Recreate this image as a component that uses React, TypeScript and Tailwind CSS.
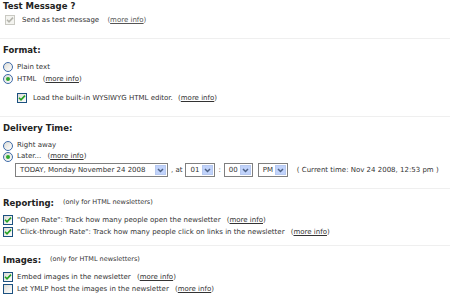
import React from "react";

const font = { fontFamily: '"DejaVu Sans", Verdana, sans-serif' };

function Check({ checked = true, disabled = false }: { checked?: boolean; disabled?: boolean }) {
  return (
    <span
      className={
        "inline-flex items-center justify-center w-[10px] h-[10px] shrink-0 border " +
        (disabled ? "border-[#c9c9c2] bg-[#f4f4f0]" : "border-[#1c5180] bg-gradient-to-br from-[#dcdcd6] to-[#ffffff]")
      }
    >
      {checked && (
        <svg width="8" height="8" viewBox="0 0 8 8">
          <path
            d="M1 3.8 L3 5.8 L7 1.6"
            fill="none"
            stroke={disabled ? "#b4b4ac" : "#21a121"}
            strokeWidth="1.6"
          />
        </svg>
      )}
    </span>
  );
}

function Radio({ checked = false }: { checked?: boolean }) {
  return (
    <span className="inline-flex items-center justify-center w-[10px] h-[10px] shrink-0 rounded-full border border-[#3d6aa8] bg-gradient-to-br from-[#dcdcd6] to-[#ffffff]">
      {checked && <span className="w-[4px] h-[4px] rounded-full bg-[#2fa82f]" />}
    </span>
  );
}

function More() {
  return (
    <span>
      (<span className="underline">more info</span>)
    </span>
  );
}

function Select({ label, width }: { label: string; width: string }) {
  return (
    <span className={"inline-flex items-center h-[14px] border border-[#7f7f7f] bg-white pl-[4px] pr-[1px] " + width}>
      <span className="flex-1 whitespace-nowrap">{label}</span>
      <span className="w-[11px] h-[10px] flex items-center justify-center bg-[#c1d3fb] border border-[#b7c9f0]">
        <svg width="7" height="5" viewBox="0 0 7 5">
          <path d="M1 1 L3.5 3.5 L6 1" fill="none" stroke="#4d6185" strokeWidth="1.5" />
        </svg>
      </span>
    </span>
  );
}

function Sep({ mt }: { mt: string }) {
  return <div className={"h-px bg-[#efefef] w-full " + mt} />;
}

function Heading({ children, mt }: { children: React.ReactNode; mt: string }) {
  return (
    <div className={"h-[12px] flex items-center pl-[3px] " + mt}>
      {children}
    </div>
  );
}

const H = "text-[8.5px] font-bold text-[#222]";
const NOTE = "ml-[9px] text-[6.5px]";

export default function App() {
  return (
    <div className="w-[450px] h-[296px] bg-white text-[#333] overflow-hidden text-[7px]" style={font}>
      <Heading mt="mt-0">
        <span className={H}>Test Message ?</span>
      </Heading>
      <div className="h-[12px] flex items-center mt-[2px] pl-[5px] gap-[7px]">
        <Check disabled />
        <span className="whitespace-nowrap">
          Send as test message <span className="ml-[6px] text-[#555]"><More /></span>
        </span>
      </div>

      <Sep mt="mt-[12px]" />
      <Heading mt="mt-[5px]">
        <span className={H}>Format:</span>
      </Heading>
      <div className="h-[12px] flex items-center mt-[5px] pl-[3px] gap-[4px]">
        <Radio />
        <span>Plain text</span>
      </div>
      <div className="h-[12px] flex items-center pl-[3px] gap-[4px]">
        <Radio checked />
        <span className="whitespace-nowrap">
          HTML <span className="ml-[4px]"><More /></span>
        </span>
      </div>
      <div className="h-[12px] flex items-center mt-[7px] pl-[17px] gap-[6px]">
        <Check />
        <span className="whitespace-nowrap">
          Load the built-in WYSIWYG HTML editor. <span className="ml-[3px]"><More /></span>
        </span>
      </div>

      <Sep mt="mt-[12px]" />
      <Heading mt="mt-[5px]">
        <span className={H}>Delivery Time:</span>
      </Heading>
      <div className="h-[11px] flex items-center mt-[6px] pl-[3px] gap-[4px]">
        <Radio />
        <span>Right away</span>
      </div>
      <div className="h-[11px] flex items-center pl-[3px] gap-[4px]">
        <Radio checked />
        <span className="whitespace-nowrap">
          Later... <span className="ml-[4px]"><More /></span>
        </span>
      </div>
      <div className="h-[14px] flex items-center mt-[1px] pl-[15px] whitespace-nowrap">
        <Select label="TODAY, Monday November 24 2008" width="w-[153px]" />
        <span className="ml-[3px]">, at</span>
        <span className="ml-[3px]"><Select label="01" width="w-[30px]" /></span>
        <span className="ml-[3px]">:</span>
        <span className="ml-[3px]"><Select label="00" width="w-[29px]" /></span>
        <span className="ml-[5px]"><Select label="PM" width="w-[30px]" /></span>
        <span className="ml-[9px]">( Current time: Nov 24 2008, 12:53 pm )</span>
      </div>

      <Sep mt="mt-[11px]" />
      <Heading mt="mt-[8px]">
        <span className={H}>Reporting:</span>
        <span className={NOTE}>(only for HTML newsletters)</span>
      </Heading>
      <div className="h-[12px] flex items-center mt-[5px] pl-[3px] gap-[4px]">
        <Check />
        <span className="whitespace-nowrap">
          "Open Rate": Track how many people open the newsletter <span className="ml-[4px]"><More /></span>
        </span>
      </div>
      <div className="h-[12px] flex items-center pl-[3px] gap-[4px]">
        <Check />
        <span className="whitespace-nowrap">
          "Click-through Rate": Track how many people click on links in the newsletter <span className="ml-[4px]"><More /></span>
        </span>
      </div>

      <Sep mt="mt-[7px]" />
      <Heading mt="mt-[8px]">
        <span className={H}>Images:</span>
        <span className={NOTE}>(only for HTML newsletters)</span>
      </Heading>
      <div className="h-[12px] flex items-center mt-[5px] pl-[3px] gap-[4px]">
        <Check />
        <span className="whitespace-nowrap">
          Embed images in the newsletter <span className="ml-[4px]"><More /></span>
        </span>
      </div>
      <div className="h-[12px] flex items-center pl-[3px] gap-[4px]">
        <Check checked={false} />
        <span className="whitespace-nowrap">
          Let YMLP host the images in the newsletter <span className="ml-[4px]"><More /></span>
        </span>
      </div>
    </div>
  );
}
